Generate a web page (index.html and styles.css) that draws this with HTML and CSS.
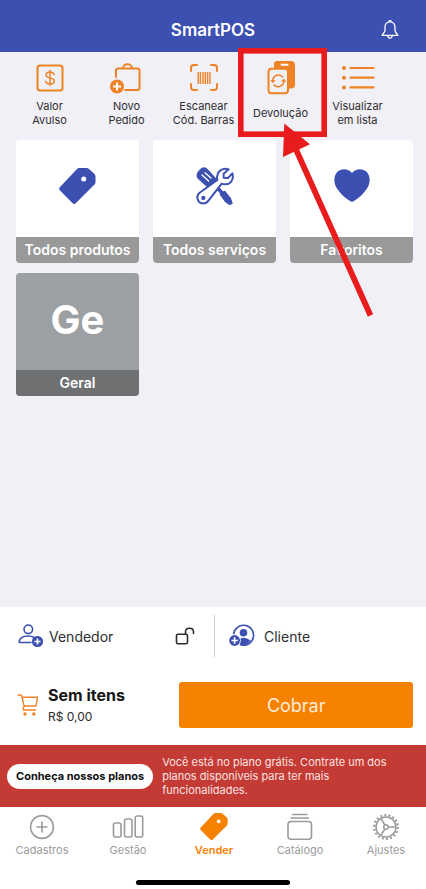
FILE: index.html
```html
<!DOCTYPE html>
<html lang="pt-BR">
<head>
<meta charset="utf-8">
<meta name="viewport" content="width=device-width, initial-scale=1">
<title>SmartPOS</title>
<link rel="stylesheet" href="styles.css">
</head>
<body>
<svg class="defs" width="0" height="0" aria-hidden="true">
  <symbol id="tag" viewBox="0 0 37 37">
    <path fill="currentColor" fill-rule="evenodd" d="M20 0H27.500Q29 0 30 1L35.500 6Q36.500 7 36.500 8.500V14Q36.500 15.500 35.500 16.500L17 35Q15.200 36.800 13.400 35L1 22.600Q-.700 20.800 1 19L18 1Q19 0 20 0ZM24.700 8.500a2.500 2.500 0 1 0 0 5a2.500 2.500 0 1 0 0-5Z"/>
  </symbol>
</svg>
<div class="app">
  <header class="header">
    <h1 class="title">SmartPOS</h1>
    <button class="bell" aria-label="Notificações">
      <svg width="18" height="20" viewBox="0 0 18 20" fill="none" stroke="currentColor" stroke-width="1.300" stroke-linejoin="round">
        <path d="M9 1.800C5.800 1.800 4 4.200 4 7V10.500C4 12.700 1.400 13.500 1.200 15.400H16.800C16.600 13.500 14 12.700 14 10.500V7C14 4.200 12.200 1.800 9 1.800Z"/>
        <path d="M7.800 1.800a1.200 1.200 0 0 1 2.400 0M6.800 15.600a2.200 2.600 0 0 0 4.400 0"/>
      </svg>
    </button>
  </header>

  <nav class="tools" aria-label="Ações">
    <button class="tool">
      <svg width="36" height="36" viewBox="0 0 36 36" fill="none" stroke="currentColor" stroke-width="2">
        <rect x="5.500" y="5.500" width="25" height="25" rx="2.500"/>
        <path stroke-width="1.500" stroke-linecap="round" d="M22 14.500C21.700 12.800 20.300 12 18 12C15.600 12 14 13 14 14.900C14 19 22.300 16.700 22.300 21C22.300 23 20.500 24 18 24C15.400 24 13.800 23 13.600 21.200M18 10.500V25.500"/>
      </svg>
      <span>Valor<br>Avulso</span>
    </button>
    <button class="tool">
      <svg width="36" height="36" viewBox="0 0 36 36" fill="none" stroke="currentColor" stroke-width="2">
        <path stroke-linecap="round" d="M7 17V10.500Q7 8.500 9 8.500H28.500Q30.500 8.500 30.500 10.500V28Q30.500 30 28.500 30H16M14 8.300C14 2.800 23 2.800 23 8.300"/>
        <circle cx="8" cy="26.500" r="7" fill="currentColor" stroke="none"/>
        <path stroke="#fff" d="M8 22.500V30.500M4 26.500H12"/>
      </svg>
      <span>Novo<br>Pedido</span>
    </button>
    <button class="tool">
      <svg width="36" height="36" viewBox="0 0 36 36" fill="none" stroke="currentColor" stroke-width="2" stroke-linecap="round">
        <path d="M5 11V8Q5 5 8 5H11M25 5H28Q31 5 31 8V11M31 24V27Q31 30 28 30H25M11 30H8Q5 30 5 27V24"/>
        <path stroke-linecap="butt" stroke-width="1.400" d="M12.200 12V24M14.400 12V24M17 12V24M19.300 12V24M21.600 12V24M24 12V24"/>
      </svg>
      <span>Escanear<br>Cód. Barras</span>
    </button>
    <div class="tool-slot">
      <button class="tool">
        <svg width="36" height="36" viewBox="0 0 36 36">
          <path fill="currentColor" d="M14 1H28Q32 1 32 5V24.500Q32 28.500 28 28.500H14Q11 28.500 11 25V4Q11 1 14 1Z"/>
          <rect x="17.500" y="3.700" width="8" height="2" rx="1" fill="#fff"/>
          <rect x="5.500" y="8.800" width="19.500" height="24.500" rx="3" fill="#f1f0f6" stroke="currentColor" stroke-width="2"/>
          <path fill="none" stroke="currentColor" stroke-width="1.500" d="M9.800 20.500A5.700 5.700 0 0 1 20 17.200M20.800 21.200A5.700 5.700 0 0 1 10.600 24.500"/>
          <path fill="currentColor" d="M7.200 20h5.200l-2.600 3.200zM18.200 21.800h5.200l-2.600-3.200z"/>
        </svg>
        <span>Devolução</span>
      </button>
      <svg class="pointer" width="139" height="272" viewBox="0 0 139 272" fill="none" stroke="#e81c1c" aria-hidden="true">
        <rect x="2.800" y="2.800" width="83.400" height="83.400" stroke-width="5.600"/>
        <path stroke-width="5.800" d="M56 97L132.500 267.500"/>
        <path fill="#e81c1c" stroke="none" d="M46.300 75.500L72 96.300L45 109Z"/>
      </svg>
    </div>
    <button class="tool">
      <svg width="36" height="36" viewBox="0 0 36 36" fill="none" stroke="currentColor" stroke-width="2.200" stroke-linecap="round">
        <path d="M10.500 8H33.500M10.500 17.700H33.500M10.500 27.400H33.500"/>
        <path stroke-width="4" d="M4 8h.01M4 17.700h.01M4 27.400h.01"/>
      </svg>
      <span>Visualizar<br>em lista</span>
    </button>
  </nav>

  <main class="grid">
    <button class="tile">
      <span class="art"><svg width="37" height="37"><use href="#tag"/></svg></span>
      <span class="caption">Todos produtos</span>
    </button>
    <button class="tile">
      <span class="art">
        <svg width="38" height="38" viewBox="46 36 114 114" fill="none" stroke="currentColor">
          <path fill="currentColor" stroke-width="4" stroke-linejoin="round" d="M50 65Q48 58 54 50L62 42Q68 37 75 40Q79 42 107 74L85 99L53 70Z"/>
          <path stroke="#fff" stroke-width="4" stroke-linecap="round" d="M73 53L91 69M64 60L84 78"/>
          <path stroke-width="11" d="M100 88L130 120"/>
          <path fill="currentColor" stroke-linejoin="round" stroke-width="4" d="M119 118L132 109L149 130L154 145L147 148L134 139Z"/>
          <path fill="#fff" stroke-width="6" stroke-linejoin="round" d="M144 43L129 56L129 68L142 69L155 55C161 73 149 89 133 88Q127 88 123 86L84 136C76 148 60 148 53 137C47 126 51 117 60 111L110 75C105 53 122 36 144 43Z"/>
          <circle cx="68" cy="129" r="6.500" fill="currentColor" stroke="none"/>
        </svg>
      </span>
      <span class="caption">Todos serviços</span>
    </button>
    <button class="tile">
      <span class="art">
        <svg width="36" height="34" viewBox="0 0 36 34"><path fill="currentColor" d="M18 4C14-1 7-.800 3.500 2.800C-1 7.500-.300 14.500 3 19.500C6.500 25 11 29 16 32Q18 33.500 20 32C25 29 29.500 25 33 19.500C36.300 14.500 37 7.500 32.500 2.800C29-.800 22-1 18 4Z"/></svg>
      </span>
      <span class="caption">Favoritos</span>
    </button>
    <button class="tile tile-category">
      <span class="art">Ge</span>
      <span class="caption">Geral</span>
    </button>
  </main>

  <section class="sale">
    <div class="people">
      <div class="seller">
        <button class="person">
          <svg width="26" height="24" viewBox="0 0 26 24" fill="none" stroke="currentColor" stroke-width="1.600">
            <circle cx="10.300" cy="5.300" r="4.300"/>
            <path stroke-linecap="round" d="M13 18.500H2Q1 18.500 1.200 17.500C2 13 6 12 10.300 12Q14 12 16 13.500"/>
            <circle cx="19.500" cy="17.500" r="5.600" fill="currentColor" stroke="none"/>
            <path stroke="#fff" d="M19.500 14.500V20.500M16.500 17.500H22.500"/>
          </svg>
          <span>Vendedor</span>
        </button>
        <button class="lock" aria-label="Bloquear vendedor">
          <svg width="20" height="18" viewBox="0 0 20 18" fill="none" stroke="currentColor" stroke-width="1.600" stroke-linecap="round">
            <rect x="1.500" y="7.300" width="11" height="9.400" rx="1.500"/>
            <path d="M10.500 7V4.800C10.500 0 18.500 0 18.500 4.800V6.500"/>
          </svg>
        </button>
      </div>
      <button class="person client">
        <svg width="26" height="24" viewBox="0 0 26 24" fill="none" stroke="currentColor" stroke-width="1.600">
          <path d="M4.600 10.500A10 10 0 1 1 12.500 21"/>
          <circle cx="14.500" cy="8.700" r="3.800" fill="currentColor" stroke="none"/>
          <path fill="currentColor" stroke="none" d="M9 16Q14.500 11.500 21.600 16.500Q17.500 21.800 11 21.500Z"/>
          <circle cx="5.600" cy="16.500" r="6.200" fill="#fff" stroke="none"/>
          <circle cx="5.600" cy="16.500" r="5.400" fill="currentColor" stroke="none"/>
          <path stroke="#fff" d="M5.600 13.300V19.700M2.400 16.500H8.800"/>
        </svg>
        <span>Cliente</span>
      </button>
    </div>
    <div class="checkout">
      <svg class="cart" width="22" height="22" viewBox="0 0 22 22" fill="none" stroke="currentColor" stroke-width="1.400" stroke-linecap="round" stroke-linejoin="round">
        <path d="M1 1H3.500Q4.500 1 4.800 2L7.200 12.500M4.900 3.200H20.500L19 12H7.200L6 15Q5.800 16 7 16H18.500"/>
        <circle cx="8" cy="20" r="1" fill="currentColor"/>
        <circle cx="16.800" cy="20" r="1" fill="currentColor"/>
      </svg>
      <div class="summary">
        <strong>Sem itens</strong>
        <span>R$ 0,00</span>
      </div>
      <button class="charge">Cobrar</button>
    </div>
  </section>

  <aside class="promo">
    <a class="plans" href="#planos">Conheça nossos planos</a>
    <p>Você está no plano grátis. Contrate um dos planos disponíveis para ter mais funcionalidades.</p>
  </aside>

  <nav class="tabs" aria-label="Principal">
    <a class="tab" href="#cadastros">
      <svg width="32" height="28" viewBox="0 0 32 28" fill="none" stroke="currentColor" stroke-width="1.600" stroke-linecap="round">
        <circle cx="16" cy="14" r="11.400"/><path d="M16 9V19M11 14H21"/>
      </svg>
      <span>Cadastros</span>
    </a>
    <a class="tab" href="#gestao">
      <svg width="32" height="28" viewBox="0 0 32 28" fill="none" stroke="currentColor" stroke-width="1.600">
        <rect x="1.500" y="10" width="7.500" height="14" rx="2"/><rect x="12.500" y="6" width="7.500" height="18" rx="2"/><rect x="23.200" y="3" width="7.500" height="21" rx="2"/>
      </svg>
      <span>Gestão</span>
    </a>
    <a class="tab tab-active" href="#vender" aria-current="page">
      <svg width="28" height="28"><use href="#tag"/></svg>
      <span>Vender</span>
    </a>
    <a class="tab" href="#catalogo">
      <svg width="32" height="28" viewBox="0 0 32 28" fill="none" stroke="currentColor" stroke-width="1.600">
        <rect x="4" y="8.500" width="23.500" height="17.700" rx="3"/>
        <path stroke-width="1.300" d="M8 1.500H23.500M6.500 5H25"/>
      </svg>
      <span>Catálogo</span>
    </a>
    <a class="tab" href="#ajustes">
      <svg width="32" height="28" viewBox="0 0 32 28" fill="none" stroke="currentColor" stroke-width="1.500">
        <circle cx="16" cy="14" r="10"/>
        <circle cx="16" cy="14" r="11.800" stroke-width="2.200" stroke-dasharray="2 2.120"/>
        <circle cx="16" cy="14" r="2.300"/>
        <path d="M18.300 14H26M14.800 12L10.900 5.400M14.800 16L10.900 22.600"/>
      </svg>
      <span>Ajustes</span>
    </a>
  </nav>
  <div class="home-bar"></div>
</div>
</body>
</html>
```
FILE: styles.css
```css
* {
  box-sizing: border-box;
}

body {
  margin: 0;
  font-family: Inter, "Liberation Sans", sans-serif;
  color: #2d2d30;
  background: #f1f0f6;
}

button {
  padding: 0;
  border: 0;
  background: none;
  font: inherit;
  color: inherit;
}

a {
  color: inherit;
  text-decoration: none;
}

svg {
  display: block;
  flex: none;
}

.defs {
  position: absolute;
}

.app {
  display: flex;
  flex-direction: column;
  min-height: 100vh;
  overflow: hidden;
}

.header {
  display: grid;
  grid-template-columns: 1fr auto 1fr;
  align-items: center;
  height: 52px;
  padding: 8px 27px 0;
  background: #3c50b2;
  color: #fff;
}

.title {
  grid-column: 2;
  margin: 0;
  font-size: 17px;
  font-weight: 600;
  line-height: 24px;
}

.bell {
  justify-self: end;
}

.tools {
  display: grid;
  grid-template-columns: repeat(5, 1fr);
  padding: 0 30px 0 11px;
}

.tool-slot {
  position: relative;
  display: grid;
}

.tool {
  display: flex;
  flex-direction: column;
  align-items: center;
  height: 88px;
  padding-top: 8px;
  font-size: 11px;
  line-height: 14px;
  white-space: nowrap;
}

.tool svg {
  color: #ee8227;
}

.tool span {
  display: flex;
  align-items: center;
  height: 28px;
  margin-top: 3px;
}

.pointer {
  position: absolute;
  top: -4px;
  left: -4px;
  pointer-events: none;
}

.grid {
  flex: 1;
  display: grid;
  grid-template-columns: repeat(3, 1fr);
  align-content: start;
  gap: 10px 14px;
  padding: 0 13px 20px 16px;
}

.tile {
  display: flex;
  flex-direction: column;
  aspect-ratio: 1;
  overflow: hidden;
  border-radius: 4px;
  background: #fff;
  color: #3c50b2;
}

.art {
  flex: 1;
  display: flex;
  align-items: center;
  justify-content: center;
  width: 100%;
  padding-bottom: 5px;
}

.caption {
  width: 100%;
  background: #999;
  color: #fff;
  font-size: 14px;
  font-weight: 600;
  line-height: 26px;
  text-align: center;
}

.tile-category {
  background: #9ca0a3;
}

.tile-category .art {
  color: #fff;
  font-size: 40px;
  font-weight: 700;
}

.tile-category .caption {
  background: #6e7072;
}

.sale {
  background: #fff;
}

.people {
  display: grid;
  grid-template-columns: 1fr 1fr;
  align-items: center;
  height: 58px;
}

.seller {
  display: flex;
  align-items: center;
  justify-content: space-between;
  padding: 0 18px;
}

.person {
  display: flex;
  align-items: center;
  gap: 5px;
  font-size: 14px;
}

.person svg {
  color: #3c50b2;
}

.client {
  gap: 9px;
  height: 42px;
  margin-left: 1px;
  padding-left: 14px;
  border-left: 1px solid #cfcfda;
}

.checkout {
  display: flex;
  align-items: center;
  height: 80px;
  padding: 0 13px 0 17px;
}

.cart {
  color: #ee8227;
}

.summary {
  display: flex;
  flex: 1;
  flex-direction: column;
  padding: 2px 0 0 9px;
  font-size: 12px;
  line-height: 22px;
}

.summary strong {
  color: #151515;
  font-size: 16px;
}

.charge {
  flex: 0 0 59%;
  height: 46px;
  border-radius: 3px;
  background: #f78100;
  color: #ffedd8;
  font-size: 18px;
}

.promo {
  display: flex;
  align-items: center;
  gap: 9px;
  height: 62px;
  padding: 0 20px 0 7px;
  background: #c43a34;
  color: #fbe3e1;
  font-size: 11px;
  line-height: 14px;
}

.promo p {
  margin: 0;
}

.plans {
  flex: none;
  padding: 6px 9px;
  border-radius: 13px;
  background: #fff;
  color: #111;
  font-weight: 700;
  line-height: 13px;
}

.tabs {
  display: grid;
  grid-template-columns: repeat(5, 1fr);
  margin: 0 -3px 0 -1px;
  padding-top: 6px;
  background: #fff;
  color: #9b9b9d;
  font-size: 11px;
  line-height: 14px;
}

.tab {
  display: flex;
  flex-direction: column;
  align-items: center;
  gap: 2px;
}

.tab-active {
  color: #f78100;
  font-weight: 600;
}

.home-bar {
  display: flex;
  justify-content: center;
  padding: 23px 0 4px;
  background: #fff;
}

.home-bar::before {
  content: "";
  width: 36%;
  height: 5px;
  border-radius: 3px;
  background: #000;
}
```
